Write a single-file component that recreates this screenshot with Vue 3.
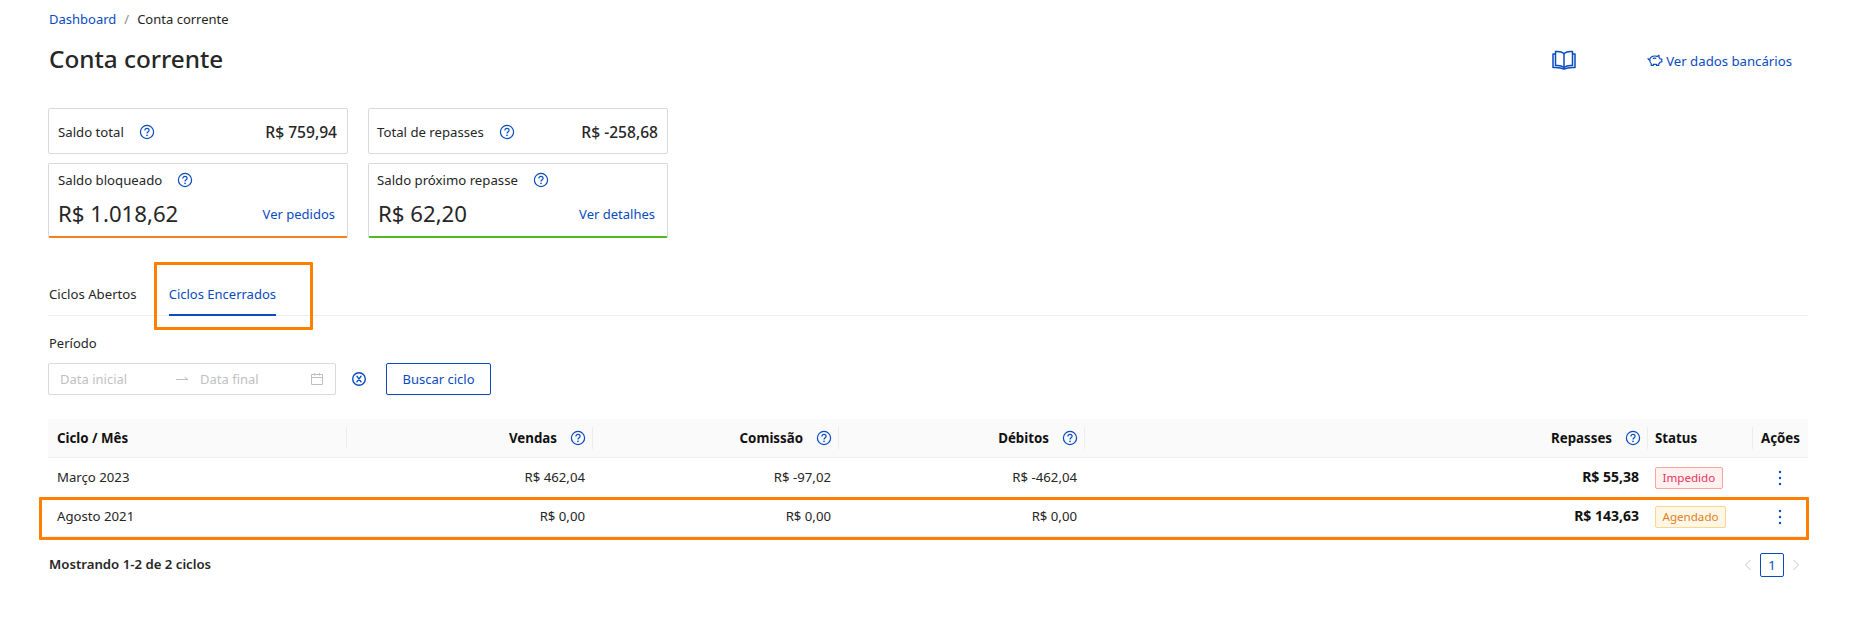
<script setup>
const rows = [
  { id: 1, ciclo: 'Março 2023', vendas: 'R$ 462,04', comissao: 'R$ -97,02', debitos: 'R$ -462,04', repasses: 'R$ 55,38', status: 'Impedido', kind: 'red' },
  { id: 2, ciclo: 'Agosto 2021', vendas: 'R$ 0,00', comissao: 'R$ 0,00', debitos: 'R$ 0,00', repasses: 'R$ 143,63', status: 'Agendado', kind: 'gold', marked: true },
]
</script>

<template>
  <div class="page">
    <nav class="crumbs">
      <a class="link">Dashboard</a><span class="slash">/</span><span>Conta corrente</span>
    </nav>

    <header class="head">
      <h1>Conta corrente</h1>
      <div class="head-actions">
        <svg class="book" viewBox="0 0 24 20" fill="none" stroke="currentColor" stroke-width="1.5" stroke-linejoin="round">
          <path d="M12 3.5C10 1.8 7 1.2 3.5 1.5V15.5C7 15.2 10 15.8 12 17.5C14 15.8 17 15.2 20.5 15.5V1.5C17 1.2 14 1.8 12 3.5Z" />
          <path d="M12 3.5V17.5" />
          <path d="M3.5 4H1V17.5C5 17.2 9 17.6 12 19C15 17.6 19 17.2 23 17.5V4H20.5" />
        </svg>
        <a class="link bank">
          <svg class="piggy" viewBox="0 0 16 16" fill="none" stroke="currentColor" stroke-width="1.2" stroke-linejoin="round" stroke-linecap="round">
            <path d="M1 6.3C1 7.4 1.8 8 2.8 8" />
            <path d="M2.8 8C2.8 5.5 5 4 8 4C8.8 4 9.5 4.1 10.1 4.4L12 3.3V5.6C12.6 6 13 6.6 13.2 7H14.8V10H13.2C12.9 10.8 12.3 11.4 11.8 11.7V13.4H9.6V12.4H6.4V13.4H4.2V11.6C3.3 10.9 2.8 9.6 2.8 8Z" />
            <path d="M6.3 6.4C7 6.1 8 6.1 8.8 6.4" />
          </svg>
          <span>Ver dados bancários</span>
        </a>
      </div>
    </header>

    <section class="cards">
      <div class="card slim first">
        <span class="label">Saldo total <svg class="help" viewBox="0 0 16 16"><use href="#help" /></svg></span>
        <strong>R$ 759,94</strong>
      </div>
      <div class="card slim second">
        <span class="label">Total de repasses <svg class="help" viewBox="0 0 16 16"><use href="#help" /></svg></span>
        <strong>R$ -258,68</strong>
      </div>
      <div class="card tall orange">
        <span class="label">Saldo bloqueado <svg class="help" viewBox="0 0 16 16"><use href="#help" /></svg></span>
        <div class="amount-row"><span class="amount">R$ 1.018,62</span><a class="link">Ver pedidos</a></div>
      </div>
      <div class="card tall green second">
        <span class="label">Saldo próximo repasse <svg class="help" viewBox="0 0 16 16"><use href="#help" /></svg></span>
        <div class="amount-row"><span class="amount">R$ 62,20</span><a class="link">Ver detalhes</a></div>
      </div>
    </section>

    <div class="tabs">
      <span class="tab first">Ciclos Abertos</span>
      <span class="tab active">Ciclos Encerrados<i class="mark-box"></i></span>
    </div>

    <div class="field-label">Período</div>
    <div class="filters">
      <div class="range">
        <span class="ph first">Data inicial</span>
        <svg class="arrow" viewBox="0 0 14 8" fill="none" stroke="currentColor" stroke-width="1"><path d="M1 4.5H13M13 4.5L9.5 2" /></svg>
        <span class="ph">Data final</span>
        <svg class="cal" viewBox="0 0 14 14" fill="none" stroke="currentColor" stroke-width="1"><path d="M1.5 2.5H12.5V12.5H1.5ZM1.5 5.5H12.5M4.5 1V3.5M9.5 1V3.5" /></svg>
      </div>
      <svg class="clear" viewBox="0 0 16 16" fill="none" stroke="currentColor" stroke-width="1.4" stroke-linecap="round"><circle cx="8" cy="8" r="6.3" /><path d="M5.9 5.2L10.1 10.8M10.1 5.2L5.9 10.8" /></svg>
      <button class="btn">Buscar ciclo</button>
    </div>

    <div class="table">
      <div class="tr th">
        <div class="cell left sep">Ciclo / Mês</div>
        <div class="cell sep">Vendas <svg class="help" viewBox="0 0 16 16"><use href="#help" /></svg></div>
        <div class="cell sep">Comissão <svg class="help" viewBox="0 0 16 16"><use href="#help" /></svg></div>
        <div class="cell sep">Débitos <svg class="help" viewBox="0 0 16 16"><use href="#help" /></svg></div>
        <div class="cell sep">Repasses <svg class="help" viewBox="0 0 16 16"><use href="#help" /></svg></div>
        <div class="cell left sep">Status</div>
        <div class="cell center">Ações</div>
      </div>
      <div v-for="r in rows" :key="r.id" class="tr td" :class="{ marked: r.marked }">
        <div class="cell left">{{ r.ciclo }}</div>
        <div class="cell">{{ r.vendas }}</div>
        <div class="cell">{{ r.comissao }}</div>
        <div class="cell">{{ r.debitos }}</div>
        <div class="cell strong">{{ r.repasses }}</div>
        <div class="cell left"><span class="tag" :class="r.kind">{{ r.status }}</span></div>
        <div class="cell center">
          <svg class="dots" viewBox="0 0 4 16" fill="currentColor"><circle cx="2" cy="2" r="1.2" /><circle cx="2" cy="8" r="1.2" /><circle cx="2" cy="14" r="1.2" /></svg>
        </div>
      </div>
    </div>

    <footer class="foot">
      <strong>Mostrando 1-2 de 2 ciclos</strong>
      <div class="pager">
        <svg class="chev" viewBox="0 0 8 12" fill="none" stroke="currentColor" stroke-width="1"><path d="M6.5 1L1.5 6L6.5 11" /></svg>
        <span class="pg">1</span>
        <svg class="chev" viewBox="0 0 8 12" fill="none" stroke="currentColor" stroke-width="1"><path d="M1.5 1L6.5 6L1.5 11" /></svg>
      </div>
    </footer>

    <svg class="defs" width="0" height="0">
      <symbol id="help" viewBox="0 0 16 16">
        <circle cx="8" cy="8" r="6.6" fill="none" stroke="currentColor" stroke-width="1.2" />
        <path d="M5.9 6.4C5.9 5.2 6.8 4.4 8 4.4C9.2 4.4 10.1 5.2 10.1 6.3C10.1 7.7 8 7.8 8 9.5" fill="none" stroke="currentColor" stroke-width="1.2" />
        <circle cx="8" cy="11.4" r="0.8" fill="currentColor" />
      </symbol>
    </svg>
  </div>
</template>

<style>
body { margin: 0; background: #fff; }
</style>

<style scoped>
.page {
  box-sizing: border-box;
  width: 1865px;
  height: 617px;
  padding: 9px 57px 0 49px;
  font-family: "Noto Sans", "Open Sans", sans-serif;
  font-size: 13px;
  line-height: 20px;
  color: #262626;
  overflow: hidden;
  position: relative;
}
.link { color: #0a4bbf; text-decoration: none; }
.crumbs { height: 20px; display: flex; }
.slash { margin: 0 8px; color: #8c8c8c; }
.head { display: flex; justify-content: space-between; align-items: center; margin-top: 14px; height: 32px; margin-right: 16px; }
h1 { margin: 0; font-size: 24.3px; line-height: 32px; font-weight: 500; color: #262626; }
.head-actions { display: flex; align-items: center; color: #0a4bbf; }
.book { width: 24px; height: 20px; margin-right: 72px; position: relative; left: 1px; top: 1px; }
.bank { display: flex; align-items: center; gap: 3px; font-size: 13.2px; }
.bank span { position: relative; top: 2px; }
.piggy { width: 16px; height: 16px; position: relative; top: 1px; }

.cards { display: grid; grid-template-columns: 300px 300px; column-gap: 20px; row-gap: 9px; margin-top: 33px; margin-left: -1px; width: 620px; }
.card { box-sizing: border-box; border: 1px solid #d9d9d9; border-radius: 2px; padding: 0 9px; background: #fff; }
.card.second { padding-left: 8px; }
.card svg.help { margin-left: 15px; }
.label { font-size: 13.2px; display: inline-flex; align-items: center; }
.slim { height: 46px; display: flex; justify-content: space-between; align-items: center; padding-top: 1px; }
.slim.first { padding-right: 10px; }
.slim strong { font-size: 15.6px; font-weight: 500; }
.tall { height: 75px; display: flex; flex-direction: column; padding-top: 6px; padding-right: 8px; }
.tall.orange { border-bottom: 2px solid #f4801f; }
.tall.green { border-bottom: 2px solid #52b81e; }
.amount-row { display: flex; justify-content: space-between; align-items: center; margin-top: 8px; padding-right: 4px; }
.amount { font-size: 22.2px; line-height: 32px; }
.second .amount { margin-left: 1px; }
.help { width: 16px; height: 16px; color: #0a4bbf; flex: none; }

.tabs { display: flex; height: 78px; box-sizing: border-box; padding-top: 46px; gap: 32px; border-bottom: 1px solid #ededed; margin-left: -1px; }
.tab { position: relative; height: 31px; }
.tab.first { margin-left: 1px; font-size: 13.2px; }
.tab.active { color: #0a4bbf; }
.tab.active::after { content: ""; position: absolute; left: 0; right: 0; bottom: -1px; height: 2px; background: #0a4bbf; }
.mark-box { position: absolute; left: -15px; right: -37px; top: -22px; height: 68px; box-sizing: border-box; border: 3px solid #ff8000; border-radius: 1px; }

.field-label { margin-top: 17px; }
.filters { display: flex; align-items: center; margin-top: 10px; margin-left: -1px; }
.range { box-sizing: border-box; width: 288px; height: 32px; border: 1px solid #d9d9d9; border-radius: 2px; display: flex; align-items: center; padding: 0 11px; color: #bfbfbf; }
.ph.first { width: 115px; }
.arrow { width: 14px; height: 8px; margin-right: 11px; }
.cal { width: 14px; height: 14px; margin-left: auto; }
.clear { width: 16px; height: 16px; color: #0a4bbf; margin: 0 19px 0 15px; }
.btn { box-sizing: border-box; width: 105px; height: 32px; border: 1px solid #0a4bbf; border-radius: 2px; background: #fff; color: #0a4bbf; font: inherit; padding: 0; box-shadow: 0 1px 1px rgba(0,0,0,.05); }

.table { margin-top: 24px; margin-left: -1px; }
.tr { display: grid; grid-template-columns: 299px 246px 246px 246px 563px 105px 55px; position: relative; }
.th { height: 38px; background: #fafafa; border-bottom: 1px solid #f0f0f0; font-weight: 700; color: #111; font-size: 13.3px; }
.td { height: 39px; font-size: 13.2px; }
.cell { display: flex; align-items: center; justify-content: flex-end; padding: 0 8px; position: relative; gap: 13px; }
.cell .help { margin-right: -1px; }
.td .cell { padding-bottom: 2px; }
.left { justify-content: flex-start; }
.cell.left:first-child { padding-left: 9px; }
.cell.left:nth-child(6) { padding-left: 7px; }
.center { justify-content: center; padding: 0; }
.sep::after { content: ""; position: absolute; right: 0; top: 8px; bottom: 8px; width: 1px; background: #ededed; }
.strong { font-weight: 700; color: #111; font-size: 14px; padding-right: 9px; }
.marked { box-shadow: 0 1px 0 #f0f0f0; }
.marked::after { content: ""; position: absolute; left: -9px; right: -1px; top: 0; height: 43px; box-sizing: border-box; border: 3px solid #ff8000; border-radius: 1px; pointer-events: none; }
.tag { box-sizing: border-box; height: 22px; line-height: 20px; padding: 0 6.5px; border: 1px solid; border-radius: 2px; font-size: 11.6px; margin-top: 2px; }
.tag.red { color: #e8345a; background: #fff1f0; border-color: #ffa39e; }
.tag.gold { color: #e07f1b; background: #fff7e6; border-color: #ffd591; }
.dots { width: 4px; height: 16px; color: #0a4bbf; margin-top: 2px; margin-right: 1px; }

.foot { display: flex; justify-content: space-between; align-items: center; margin-top: 17px; height: 24px; margin-right: 8px; }
.foot strong { font-weight: 600; position: relative; top: -1px; font-size: 13.2px; }
.pager { display: flex; align-items: center; gap: 8px; color: #c4c4c4; }
.chev { width: 8px; height: 12px; }
.pg { box-sizing: border-box; width: 24px; height: 24px; border: 1px solid #0a4bbf; border-radius: 2px; color: #0a4bbf; text-align: center; line-height: 22px; }
.defs { position: absolute; }
</style>
